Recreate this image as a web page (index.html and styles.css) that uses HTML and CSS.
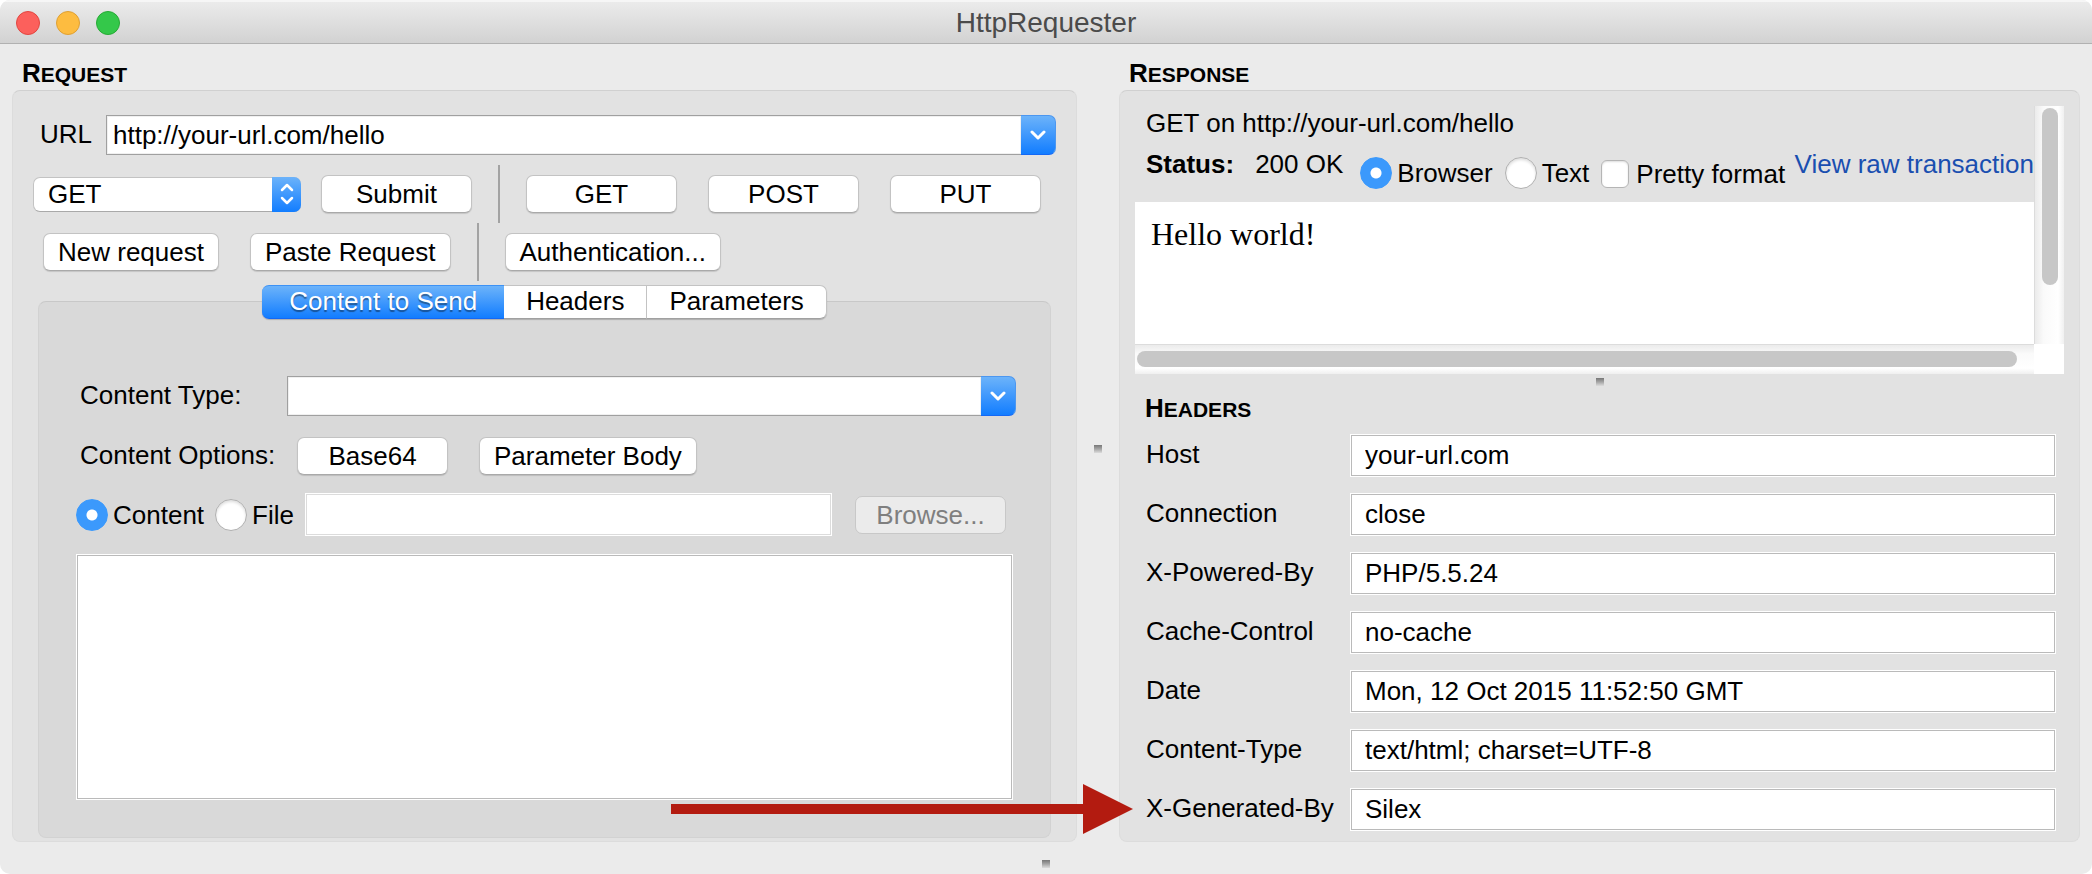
FILE: index.html
```html
<!DOCTYPE html>
<html lang="en">
<head>
<meta charset="utf-8">
<title>HttpRequester</title>
<link rel="stylesheet" href="styles.css">
</head>
<body>
<div class="window">
  <header class="titlebar">
    <div class="lights">
      <button class="light light-close" type="button" aria-label="Close"></button>
      <button class="light light-minimize" type="button" aria-label="Minimize"></button>
      <button class="light light-zoom" type="button" aria-label="Zoom"></button>
    </div>
    <h1 class="title">HttpRequester</h1>
  </header>

  <main class="panes">
    <section class="pane">
      <h2 class="caption">Request</h2>
      <div class="group request">
        <div class="url-row">
          <label class="url-label" for="url">URL</label>
          <div class="combo">
            <input class="combo-input" id="url" type="text" value="http://your-url.com/hello">
            <button class="combo-button" type="button" aria-label="Show URL history">
              <svg width="16" height="10" viewBox="0 0 16 10"><path d="M2 2l6 6 6-6" fill="none" stroke="#fff" stroke-width="3" stroke-linecap="round" stroke-linejoin="round"/></svg>
            </button>
          </div>
        </div>

        <div class="toolbar">
          <div class="popup">
            <select class="popup-select" aria-label="Method"><option>GET</option><option>POST</option><option>PUT</option></select>
            <span class="popup-arrows">
              <svg width="14" height="22" viewBox="0 0 14 22"><path d="M2 7l5-5 5 5M2 15l5 5 5-5" fill="none" stroke="#fff" stroke-width="2.5" stroke-linecap="round" stroke-linejoin="round"/></svg>
            </span>
          </div>
          <button class="button" type="button">Submit</button>
          <span class="separator"></span>
          <div class="buttons">
            <button class="button" type="button">GET</button>
            <button class="button" type="button">POST</button>
            <button class="button" type="button">PUT</button>
          </div>
        </div>

        <div class="toolbar toolbar-second">
          <div class="buttons">
            <button class="button" type="button">New request</button>
            <button class="button" type="button">Paste Request</button>
          </div>
          <span class="separator"></span>
          <button class="button" type="button">Authentication...</button>
        </div>

        <div class="tabs" role="tablist">
          <button class="tab tab-active" type="button" role="tab" aria-selected="true">Content to Send</button>
          <button class="tab" type="button" role="tab" aria-selected="false">Headers</button>
          <button class="tab" type="button" role="tab" aria-selected="false">Parameters</button>
        </div>

        <div class="group tab-panel" role="tabpanel">
          <div class="field-row type-row">
            <label class="field-label" for="content-type">Content Type:</label>
            <div class="combo">
              <input class="combo-input" id="content-type" type="text">
              <button class="combo-button" type="button" aria-label="Show content types">
                <svg width="16" height="10" viewBox="0 0 16 10"><path d="M2 2l6 6 6-6" fill="none" stroke="#fff" stroke-width="3" stroke-linecap="round" stroke-linejoin="round"/></svg>
              </button>
            </div>
          </div>
          <div class="field-row">
            <span class="field-label options-label">Content Options:</span>
            <div class="buttons">
              <button class="button" type="button">Base64</button>
              <button class="button" type="button">Parameter Body</button>
            </div>
          </div>
          <div class="source-row">
            <label class="choice"><input class="radio" type="radio" name="source" checked>Content</label>
            <label class="choice"><input class="radio" type="radio" name="source">File</label>
            <input class="text-field file-field" type="text" aria-label="File path">
            <button class="button" type="button" disabled>Browse...</button>
          </div>
          <textarea class="body-field" aria-label="Request body"></textarea>
        </div>
      </div>
    </section>

    <div class="splitter"><span class="grip"></span></div>

    <section class="pane">
      <h2 class="caption">Response</h2>
      <div class="group response">
        <div class="viewer">
          <div class="viewer-content">
            <div class="summary">GET on http://your-url.com/hello</div>
            <div class="status-row">
              <strong class="status-label">Status:</strong>
              <span class="status-value">200 OK</span>
              <div class="view-options">
                <label class="choice"><input class="radio" type="radio" name="view" checked>Browser</label>
                <label class="choice"><input class="radio" type="radio" name="view">Text</label>
                <label class="choice choice-check"><input class="checkbox" type="checkbox">Pretty format</label>
              </div>
              <a class="raw-link" href="#">View raw transaction</a>
            </div>
            <div class="document">Hello world!</div>
          </div>
          <div class="track track-vertical"><div class="thumb thumb-vertical"></div></div>
          <div class="track track-horizontal"><div class="thumb thumb-horizontal"></div></div>
          <div class="corner"></div>
        </div>
        <div class="row-splitter"><span class="grip"></span></div>
        <h3 class="caption headers-caption">Headers</h3>
        <div class="headers">
          <label class="header-name" for="h-host">Host</label>
          <input class="text-field" id="h-host" type="text" value="your-url.com" readonly>
          <label class="header-name" for="h-connection">Connection</label>
          <input class="text-field" id="h-connection" type="text" value="close" readonly>
          <label class="header-name" for="h-powered">X-Powered-By</label>
          <input class="text-field" id="h-powered" type="text" value="PHP/5.5.24" readonly>
          <label class="header-name" for="h-cache">Cache-Control</label>
          <input class="text-field" id="h-cache" type="text" value="no-cache" readonly>
          <label class="header-name" for="h-date">Date</label>
          <input class="text-field" id="h-date" type="text" value="Mon, 12 Oct 2015 11:52:50 GMT" readonly>
          <label class="header-name" for="h-type">Content-Type</label>
          <input class="text-field" id="h-type" type="text" value="text/html; charset=UTF-8" readonly>
          <label class="header-name" for="h-generated">X-Generated-By
            <svg class="pointer" width="462" height="50" viewBox="0 0 462 50" aria-hidden="true"><path d="M0 20H412V0L462 25L412 50V30H0z" fill="#b31b10"/></svg>
          </label>
          <input class="text-field" id="h-generated" type="text" value="Silex" readonly>
        </div>
      </div>
    </section>
  </main>

  <footer class="footer"><span class="grip"></span></footer>
</div>
</body>
</html>
```

FILE: styles.css
```css
* {
  box-sizing: border-box;
}

body {
  margin: 0;
  background: #fff;
  color: #000;
  font: 26px/30px "Liberation Sans", Arial, sans-serif;
}

button,
input,
select,
textarea {
  margin: 0;
  font: inherit;
  color: inherit;
}

.window {
  display: flex;
  flex-direction: column;
  min-height: 100vh;
  overflow: hidden;
  border-radius: 10px;
  background: #ebebeb;
}

/* Title bar */
.titlebar {
  display: grid;
  grid-template-columns: 1fr auto 1fr;
  align-items: center;
  height: 44px;
  padding: 0 16px;
  border-top: 2px solid #f6f6f6;
  border-bottom: 1px solid #b1b1b1;
  background: linear-gradient(#ebebeb, #d2d2d2);
}

.lights {
  display: flex;
  gap: 16px;
}

.light {
  width: 24px;
  height: 24px;
  padding: 0;
  border: 1px solid;
  border-radius: 50%;
}

.light-close {
  border-color: #e24640;
  background: #fc605c;
}

.light-minimize {
  border-color: #dfa033;
  background: #fdbc40;
}

.light-zoom {
  border-color: #27aa35;
  background: #34c84a;
}

.title {
  margin: 0;
  color: #4b4b4b;
  font-size: 28px;
  font-weight: 400;
}

/* Panes */
.panes {
  display: grid;
  flex: 1;
  grid-template-columns: 1065fr 42px 961fr;
  padding: 0 12px;
}

.pane {
  display: flex;
  flex-direction: column;
  min-width: 0;
}

.caption {
  height: 46px;
  margin: 0;
  padding: 14px 10px 2px;
  font-size: 21px;
  font-weight: 700;
  text-transform: uppercase;
}

.caption::first-letter {
  font-size: 26px;
}

.group {
  display: flex;
  flex: 1;
  flex-direction: column;
  border: 1px solid #dcdcdc;
  border-top-color: #d0d0d0;
  border-radius: 8px;
  background: #e2e2e2;
}

.splitter {
  display: flex;
  align-items: center;
  justify-content: center;
  padding-top: 12px;
}

.row-splitter {
  display: flex;
  justify-content: center;
  padding: 4px 0 7px;
}

.footer {
  display: flex;
  justify-content: center;
  padding: 18px 0 6px;
}

.grip {
  width: 8px;
  height: 8px;
  background: linear-gradient(#777, #a5a5a5 50%, #dcdcdc);
}

/* Controls */
.button {
  min-width: 151px;
  height: 38px;
  padding: 0 14px;
  border: 1px solid #c3c3c3;
  border-bottom-color: #a9a9a9;
  border-radius: 7px;
  background: #fff;
  box-shadow: 0 1px 1px #0002;
  white-space: nowrap;
}

.button:disabled {
  border-color: #c8c8c8;
  background: #ebebeb;
  box-shadow: none;
  color: #7f7f7f;
}

.buttons {
  display: flex;
  gap: 31px;
}

.combo {
  display: flex;
  flex: 1;
  height: 40px;
}

.combo-input {
  flex: 1;
  min-width: 0;
  padding: 0 6px;
  border: 1px solid #a0a0a0;
  border-right: 0;
  background: #fff;
  box-shadow: inset 0 0 0 1px #f0f0f0;
}

.combo-button {
  display: flex;
  align-items: center;
  justify-content: center;
  width: 35px;
  padding: 0;
  border: 1px solid #4c97f0;
  border-bottom-color: #1468f5;
  border-left: 0;
  border-radius: 0 7px 7px 0;
  background: linear-gradient(#6cb3fa, #127dff);
}

.popup {
  position: relative;
  width: 268px;
}

.popup-select {
  display: block;
  width: 100%;
  height: 35px;
  padding: 0 40px 0 14px;
  border: 1px solid #c3c3c3;
  border-bottom-color: #a9a9a9;
  border-radius: 7px;
  background: #fff;
  appearance: none;
}

.popup-arrows {
  position: absolute;
  top: 0;
  right: 0;
  bottom: 0;
  display: flex;
  align-items: center;
  justify-content: center;
  width: 29px;
  border-radius: 0 7px 7px 0;
  background: linear-gradient(#6cb3fa, #127dff);
  pointer-events: none;
}

.text-field {
  min-width: 0;
  height: 43px;
  padding: 0 14px 1px;
  border: 1px solid #fff;
  background: #fff;
  box-shadow: inset 0 0 0 1px #bababa;
}

.choice {
  display: flex;
  align-items: center;
  gap: 5px;
  white-space: nowrap;
}

.radio {
  width: 32px;
  height: 32px;
  border: 1px solid #b0b0b0;
  border-radius: 50%;
  background: #fff;
  box-shadow: inset 0 2px 3px #0002;
  appearance: none;
}

.radio:checked {
  border-color: #3b99fc;
  background: radial-gradient(circle, #fff 5px, #3b99fc 6px);
  box-shadow: none;
}

.checkbox {
  width: 28px;
  height: 28px;
  border: 1px solid #b5b5b5;
  border-radius: 6px;
  background: #fff;
  box-shadow: inset 0 1px 2px #0002;
  appearance: none;
}

/* Request pane */
.request {
  padding: 24px 20px 3px;
}

.url-row {
  display: flex;
  align-items: center;
  margin-bottom: 10px;
}

.url-label {
  width: 73px;
  padding: 0 0 2px 7px;
}

.toolbar {
  display: flex;
  align-items: center;
  height: 58px;
}

.toolbar .popup {
  margin-right: 20px;
}

.toolbar-second {
  padding-left: 10px;
}

.separator {
  align-self: stretch;
  width: 2px;
  margin: 0 26px;
  background: #a3a3a3;
}

.tabs {
  position: relative;
  display: flex;
  align-self: center;
  height: 34px;
  margin: 4px 0 -18px;
  border-radius: 7px;
  box-shadow: 0 1px 1px #0003;
}

.tab {
  padding: 0 22px 4px;
  border: 1px solid #c3c3c3;
  border-bottom-color: #a0a0a0;
  border-left: 0;
  background: #fff;
}

.tab:last-child {
  border-radius: 0 7px 7px 0;
}

.tab-active {
  padding: 0 27px 4px;
  border-color: #3d92f5;
  border-right: 0;
  border-bottom-color: #1468f5;
  border-radius: 7px 0 0 7px;
  background: linear-gradient(#6cb3fa, #127dff);
  color: #fff;
  text-shadow: 0 2px 1px #0006;
}

.tab-panel {
  gap: 18px;
  margin: 0 5px;
  padding: 74px 34px 37px 37px;
  border-color: #d2d2d2;
  border-top-color: #c8c8c8;
  background: #d9d9d9;
}

.field-row {
  display: flex;
  align-items: center;
  padding-left: 4px;
}

.type-row {
  margin-bottom: 3px;
}

.field-label {
  width: 207px;
  padding-bottom: 2px;
}

.options-label {
  width: 217px;
}

.source-row {
  display: flex;
  align-items: center;
  gap: 11px;
  margin-right: 10px;
}

.file-field {
  flex: 1;
  margin-right: 12px;
  box-shadow: inset 0 0 0 1px #dcdcdc;
}

.body-field {
  flex: 1;
  min-height: 200px;
  margin-right: 3px;
  padding: 6px;
  border: 1px solid #fff;
  background: #fff;
  box-shadow: inset 0 0 0 1px #bababa;
  resize: none;
}

/* Response pane */
.response {
  padding-bottom: 10px;
}

.viewer {
  display: grid;
  grid-template-columns: minmax(0, 1fr) 30px;
  grid-template-rows: 1fr 30px;
  margin: 15px 15px 0;
}

.viewer-content {
  display: flex;
  flex-direction: column;
  overflow: hidden;
}

.summary {
  padding: 2px 11px 11px;
}

.status-row {
  display: flex;
  height: 53px;
  padding-left: 11px;
  white-space: nowrap;
}

.status-value {
  margin: 0 17px 0 21px;
}

.view-options {
  display: flex;
  gap: 12px;
  height: 32px;
  margin-top: 8px;
}

.choice-check {
  gap: 7px;
  padding-top: 2px;
}

.raw-link {
  margin-left: auto;
  color: #1a4fb0;
  text-decoration: none;
}

.document {
  height: 142px;
  padding: 14px 16px;
  background: #fff;
  font-family: "Liberation Serif", "Times New Roman", serif;
  font-size: 32px;
  line-height: 37px;
}

.track-vertical {
  padding: 2px 6px 0 7px;
  border-left: 1px solid #dcdcdc;
  background: linear-gradient(90deg, #ebebeb, #fafafa 30%, #fff 80%, #f0f0f0);
}

.track-horizontal {
  padding: 6px 17px 7px 2px;
  border-top: 1px solid #dcdcdc;
  background: linear-gradient(#ebebeb, #fafafa 30%, #fff 80%, #f0f0f0);
}

.thumb {
  border-radius: 8px;
  background: #c7c7c7;
}

.thumb-vertical {
  height: 75%;
}

.thumb-horizontal {
  height: 16px;
}

.corner {
  background: #fff;
}

.headers-caption {
  height: 41px;
  padding: 0 25px;
}

.headers {
  display: grid;
  grid-template-columns: 204px minmax(0, 1fr);
  align-items: center;
  row-gap: 16px;
  padding: 0 23px 0 26px;
}

.header-name {
  position: relative;
  padding-bottom: 4px;
}

.pointer {
  position: absolute;
  top: 50%;
  right: 100%;
  margin: -26px 13px 0 0;
}
```
